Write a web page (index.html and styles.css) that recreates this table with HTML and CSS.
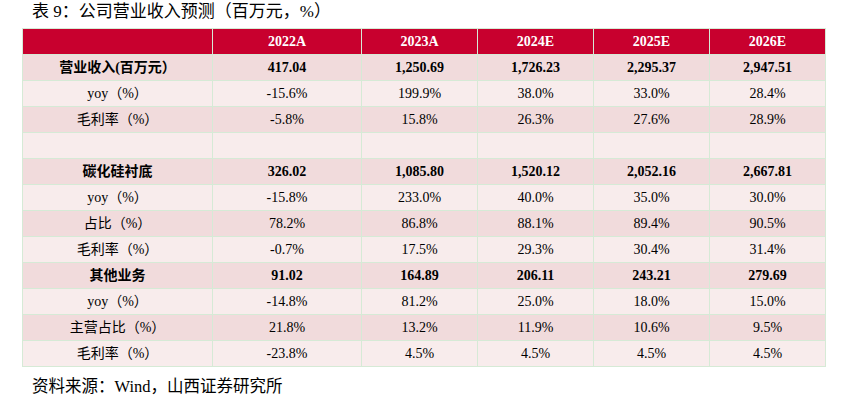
FILE: index.html
```html
<!DOCTYPE html>
<html lang="zh">
<head>
<meta charset="utf-8">
<link rel="stylesheet" href="styles.css">
</head>
<body>
<div class="page">
  <div class="title">表 9：公司营业收入预测（百万元，%）</div>
  <table class="tbl">
    <colgroup>
      <col class="c0"><col class="c1"><col class="c2"><col class="c2"><col class="c2"><col class="c2">
    </colgroup>
    <tr class="head"><td></td><td>2022A</td><td>2023A</td><td>2024E</td><td>2025E</td><td>2026E</td></tr>
    <tr class="dark b"><td>营业收入(百万元）</td><td>417.04</td><td>1,250.69</td><td>1,726.23</td><td>2,295.37</td><td>2,947.51</td></tr>
    <tr class="light"><td>yoy（%）</td><td>-15.6%</td><td>199.9%</td><td>38.0%</td><td>33.0%</td><td>28.4%</td></tr>
    <tr class="dark"><td>毛利率（%）</td><td>-5.8%</td><td>15.8%</td><td>26.3%</td><td>27.6%</td><td>28.9%</td></tr>
    <tr class="light"><td></td><td></td><td></td><td></td><td></td><td></td></tr>
    <tr class="dark b"><td>碳化硅衬底</td><td>326.02</td><td>1,085.80</td><td>1,520.12</td><td>2,052.16</td><td>2,667.81</td></tr>
    <tr class="light"><td>yoy（%）</td><td>-15.8%</td><td>233.0%</td><td>40.0%</td><td>35.0%</td><td>30.0%</td></tr>
    <tr class="dark"><td>占比（%）</td><td>78.2%</td><td>86.8%</td><td>88.1%</td><td>89.4%</td><td>90.5%</td></tr>
    <tr class="light"><td>毛利率（%）</td><td>-0.7%</td><td>17.5%</td><td>29.3%</td><td>30.4%</td><td>31.4%</td></tr>
    <tr class="dark b"><td>其他业务</td><td>91.02</td><td>164.89</td><td>206.11</td><td>243.21</td><td>279.69</td></tr>
    <tr class="light"><td>yoy（%）</td><td>-14.8%</td><td>81.2%</td><td>25.0%</td><td>18.0%</td><td>15.0%</td></tr>
    <tr class="dark"><td>主营占比（%）</td><td>21.8%</td><td>13.2%</td><td>11.9%</td><td>10.6%</td><td>9.5%</td></tr>
    <tr class="light"><td>毛利率（%）</td><td>-23.8%</td><td>4.5%</td><td>4.5%</td><td>4.5%</td><td>4.5%</td></tr>
  </table>
  <div class="source">资料来源：Wind，山西证券研究所</div>
</div>
</body>
</html>
```

FILE: styles.css
```css
html, body {
  margin: 0;
  padding: 0;
  background: #ffffff;
}
body {
  font-family: "Liberation Serif", "Noto Sans CJK SC", serif;
  color: #000000;
}
.page {
  width: 845px;
  height: 402px;
  padding: 0 0 0 22px;
  box-sizing: border-box;
}
.title {
  font-size: 17px;
  line-height: 22px;
  padding-left: 10px;
  padding-top: 1px;
  height: 27px;
  box-sizing: border-box;
}
.tbl {
  border-collapse: collapse;
  table-layout: fixed;
  width: 803px;
  font-size: 14px;
  margin-top: 1px;
}
.c0 { width: 190px; }
.c1 { width: 149px; }
.c2 { width: 116px; }
.tbl td {
  border: 1px solid #d6ead6;
  text-align: center;
  padding: 0;
  height: 25px;
  line-height: 18px;
  white-space: nowrap;
}
.head td {
  background: #c8002e;
  color: #ffffff;
  font-weight: bold;
}
.dark td { background: #f1dbdc; }
.light td { background: #f8ecec; }
.b td { font-weight: bold; }
.source {
  font-size: 16.5px;
  line-height: 22px;
  padding-left: 10px;
  margin-top: 9px;
}
```
